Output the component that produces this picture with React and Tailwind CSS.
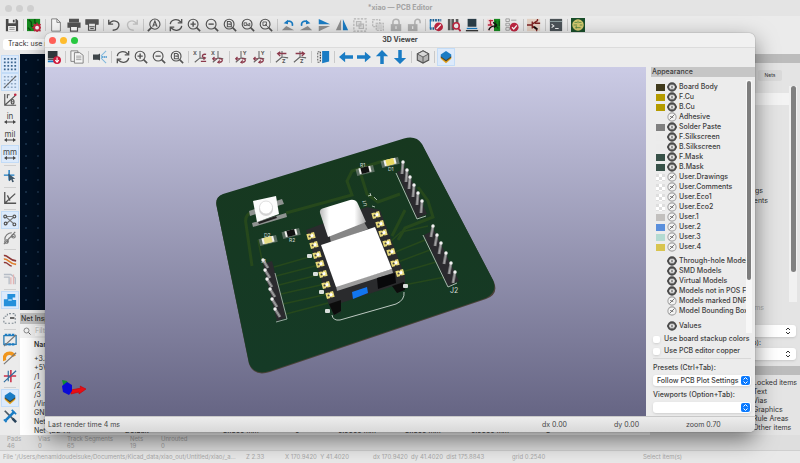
import { useState } from 'react'

const GRAY = '#545454'
const BLUE = '#1a7cc4'
const RED = '#bf2641'

const Svg = ({ children, className = 'w-[14px] h-[14px]' }) => (
  <svg viewBox="0 0 16 16" className={className} fill="none" stroke={GRAY} strokeWidth="1.3" aria-hidden="true">
    {children}
  </svg>
)

const Lens = ({ children }) => (
  <Svg>
    <circle cx="7" cy="7" r="5.6" />
    <path d="M11 11l4 4" strokeWidth="1.8" />
    {children}
  </Svg>
)

const Axis = ({ up, letter, flip }) => (
  <Svg>
    <path d="M8 1v8M8 9l6 1M8 9l-6 5" stroke="#666" strokeWidth="1.2" />
    <path d={flip ? 'M9 10c5-1 5 4 1 4M10 12l-2 2 2 1' : 'M15 5c-5-1-6 4-1 4M12 8l2 1-2 2'} stroke="#8c3a4c" strokeWidth="1.5" />
    <path d={flip ? 'M2 10h5M4 8l-2 2 2 2' : 'M9 13h6'} stroke="#8c3a4c" strokeWidth="1.4" />
    <text x={up ? 10 : 0} y="6" fontSize="6" fontWeight="700" fill={GRAY} stroke="none">{letter}</text>
  </Svg>
)

const AxisZ = ({ flip }) => (
  <Svg>
    <path d="M8 1v7M8 8l7 1M8 8l-7 6" stroke="#666" strokeWidth="1.2" />
    <path d={flip ? 'M3 4h9M10 2l3 2-3 3' : 'M13 4H4M6 2L3 4l3 3'} stroke="#8c3a4c" strokeWidth="1.5" />
    <text x="8" y="15" fontSize="6" fontWeight="700" fill={GRAY} stroke="none">Z</text>
  </Svg>
)

const Arrow = ({ d }) => (
  <Svg>
    <path d={d} fill={BLUE} stroke="none" />
  </Svg>
)

const icons = {
  save: (
    <Svg>
      <path d="M1 1h12l2 2v12H1z" fill="#484848" stroke="none" />
      <path d="M4 1h8v5H4zM3.5 9h9v6h-9z" fill="#eee" stroke="none" />
      <path d="M9 2h2v3H9z" fill="#484848" stroke="none" />
      <path d="M5 11h6M5 13h6" stroke="#888" strokeWidth="1" />
    </Svg>
  ),
  boardSetup: (
    <Svg>
      <path d="M0 1h15v14H0z" fill="#16891f" stroke="none" />
      <path d="M2 2l3 3v4l3 3M9 1v4l4 3M1 11l3 3" stroke="#0a4d10" strokeWidth="1.5" />
      <circle cx="11.5" cy="11" r="3.2" stroke={RED} strokeWidth="2" fill="#eee" />
      <path d="M11.5 5.5v2M11.5 14v2M6 11h2M15 11h1M7.5 7l1.5 1.5M14 8.5L15.5 7M9 14l-1 1M14 14l1.5 1" stroke={RED} strokeWidth="1.6" />
    </Svg>
  ),
  page: (
    <Svg>
      <path d="M3 1h6l4 4v10H3z" fill="#f6f6f6" strokeWidth="1" stroke="#777" />
      <path d="M9 1v4h4" strokeWidth="1" stroke="#777" />
    </Svg>
  ),
  print: (
    <Svg>
      <path d="M3 1.5h10v3H3z" fill={GRAY} />
      <path d="M0.5 5h15v6h-3V9h-9v2h-3z" fill={GRAY} stroke="none" />
      <path d="M4 9.5h8V15H4z" fill="#fff" />
    </Svg>
  ),
  plot: (
    <Svg>
      <path d="M1 2h14v5h-3V5H4v2H1z" fill={GRAY} stroke={GRAY} />
      <path d="M4 6h8v8H4z" fill="#e8e8e8" />
      <path d="M5 10h6M6 12h4" />
    </Svg>
  ),
  undo: (
    <Svg>
      <path d="M2 2v5h5M2.5 7c3-6 12-4 11 2-1 4-4 5-7 5" strokeWidth="1.6" />
    </Svg>
  ),
  redo: (
    <Svg>
      <path d="M14 2v5H9M13.5 7C10 1 2 3 3 9c1 4 4 5 7 5" stroke="#c2c2c2" strokeWidth="1.6" />
    </Svg>
  ),
  find: (
    <Svg>
      <circle cx="9" cy="7" r="5.8" />
      <path d="M5 11l-4 4" strokeWidth="2" />
      <path d="M6.5 10L9 3.5 11.5 10M7.3 8h3.4" />
    </Svg>
  ),
  refresh: (
    <Svg>
      <path d="M1.5 7C2 2 9 0 13.5 4.5M14.5 1v4.5H10M14.5 9C14 14 7 16 2.5 11.5M1.5 15v-4.5H6" strokeWidth="1.5" />
    </Svg>
  ),
  zoomIn: <Lens><path d="M4 7h6M7 4v6" strokeWidth="1.6" /></Lens>,
  zoomOut: <Lens><path d="M4 7h6" strokeWidth="1.6" /></Lens>,
  zoomFit: <Lens><path d="M5 4h3l1.5 1.5V10H5zM6 7h3" strokeWidth="1.2" /></Lens>,
  zoomObjects: <Lens><path d="M3.5 5.5h3v3h-3zM7 8l3-2v3z" strokeWidth="1" /></Lens>,
  zoomSel: <Lens><path d="M4.5 4.5h4v4h-4zM7 7l3 3" strokeWidth="1" /></Lens>,
  rotL: (
    <Svg>
      <path d="M1 14h14L6 9z" fill="#909090" stroke="none" />
      <path d="M13 9c1-5-4-7-7-4" stroke={BLUE} strokeWidth="1.8" />
      <path d="M3 6l5-4v5z" fill={BLUE} stroke="none" />
    </Svg>
  ),
  rotR: (
    <Svg>
      <path d="M15 14H1l9-5z" fill="#909090" stroke="none" />
      <path d="M3 9C2 4 7 2 10 5" stroke={BLUE} strokeWidth="1.8" />
      <path d="M13 6L8 2v5z" fill={BLUE} stroke="none" />
    </Svg>
  ),
  flipV: (
    <Svg>
      <path d="M2 1l13 6H2z" fill={BLUE} stroke="none" />
      <path d="M2 15l13-6H2z" fill="#909090" stroke="none" />
    </Svg>
  ),
  flipH: (
    <Svg>
      <path d="M7 1v13H1z" fill="#909090" stroke="none" />
      <path d="M9 1v13h6z" fill={BLUE} stroke="none" />
    </Svg>
  ),
  group: (
    <Svg>
      <path d="M1 1h14v14H1z" stroke="#b5b5b5" strokeDasharray="2.5 1.5" />
      <path d="M4 4h5v5H4zM7 7h5v5H7z" stroke="#bbb" fill="#ddd" />
    </Svg>
  ),
  ungroup: (
    <Svg>
      <path d="M2 2h8v8H2zM6 6h8v8H6z" stroke="#b5b5b5" strokeDasharray="2.5 1" />
      <path d="M7 7h6v6H7z" fill="#d5d5d5" stroke="none" />
    </Svg>
  ),
  lock: (
    <Svg>
      <path d="M4.5 8V4.5c0-4 7-4 7 0V8" stroke="#b5b5b5" strokeWidth="1.8" />
      <path d="M2 7h12v8H2z" fill="#b0b0b0" stroke="none" />
      <path d="M8 9.500v3" stroke="#eee" />
    </Svg>
  ),
  unlock: (
    <Svg>
      <path d="M9 8V4.5c0-4 6-4 6 0V6" stroke="#b5b5b5" strokeWidth="1.8" />
      <path d="M1 7h11v8H1z" fill="#b0b0b0" stroke="none" />
      <path d="M6.5 9.5v3" stroke="#eee" />
    </Svg>
  ),
  footprintEditor: (
    <Svg>
      <path d="M1 2h13v10H1z" fill="#f3f3f3" stroke="none" />
      <path d="M1 2.5h13M1 12h8" stroke="#1d5f92" strokeWidth="3" strokeDasharray="2 1" />
      <path d="M1.5 2v10" stroke={BLUE} />
      <circle cx="11" cy="10" r="5" fill={RED} stroke="none" />
      <path d="M8.5 12.5l5-5" stroke="#fff" strokeWidth="1.6" />
    </Svg>
  ),
  footprintLib: (
    <Svg>
      <path d="M1 1h3v13H1zM5 1h3v13H5zM10 1h3v8h-3z" fill="#5b5b5b" stroke="none" />
      <circle cx="10.5" cy="9" r="3.5" stroke={RED} strokeWidth="1.8" fill="#eee" />
      <path d="M13 12l2.5 3" stroke={RED} strokeWidth="2" />
    </Svg>
  ),
  viewer: (
    <Svg>
      <path d="M3 1h10v9H3z" fill="#2c3e48" stroke="none" />
      <path d="M2 12h12" stroke={BLUE} strokeWidth="1.5" />
      <path d="M1 14.5h14" stroke="#333" strokeWidth="1.5" />
    </Svg>
  ),
  updatePcb: (
    <Svg>
      <path d="M0 1h15v14H0z" fill="#f0dede" stroke="none" />
      <path d="M8 1h7v14H8z" fill="#158a20" stroke="none" />
      <path d="M10 3v6l3 3M14 3v6" stroke="#0a4d10" strokeWidth="1.3" />
      <path d="M2 3h5M4 2v6M1 8h5" stroke={RED} strokeWidth="1.5" />
      <path d="M2 14c1-4 4-5 8-5M7 5l4 3-3 3" stroke="#111" strokeWidth="1.6" />
    </Svg>
  ),
  drc: (
    <Svg>
      <path d="M1 1h4v3H1zM1 6h4v3H1zM1 11h4v3H1z" stroke="#999" strokeWidth="1" />
      <path d="M7 2.5h6" stroke="#aaa" />
      <circle cx="10.5" cy="10.5" r="5" fill={RED} stroke="none" />
      <path d="M8 10.5l2 2 3.5-4" stroke="#fff" strokeWidth="1.5" />
    </Svg>
  ),
  schematic: (
    <Svg>
      <path d="M0 1h15v14H0z" fill="#e5d3c6" stroke="none" />
      <path d="M0 8h6M6 4v8M6 7l6-4v-2M6 9l5 4v2M9 6h6" stroke="#7d2323" strokeWidth="1.5" />
      <path d="M8 10l4 3" stroke="#111" strokeWidth="2" />
    </Svg>
  ),
  console: (
    <Svg>
      <path d="M1 1h14v14H1z" fill="#4c5358" stroke="none" />
      <path d="M1 4h14" stroke="#9aa" strokeWidth="1" />
      <path d="M3 7l2.5 2L3 11M7 12h4" stroke="#eee" />
    </Svg>
  ),
  plugin: (
    <Svg>
      <path d="M0 0h16v16H0z" fill="#1a4f2b" stroke="none" />
      <circle cx="8" cy="8" r="6.6" fill="#d6ca70" stroke="none" />
      <path d="M4 5h3M9 5h3M3 8h4M10 8h3M5 11h6M8 3v3M6 9v3" stroke="#5d8a45" strokeWidth="1" />
    </Svg>
  ),
  reload: (
    <Svg>
      <path d="M1 1h11v8H1z" fill="#30383c" stroke="none" />
      <path d="M1 10.5h8" stroke="#222" strokeWidth="1.5" />
      <path d="M1 13h8" stroke={BLUE} strokeWidth="2" />
      <circle cx="11.5" cy="11.5" r="4.5" fill="#d0193a" stroke="none" />
      <path d="M11.5 8.5v5M9.5 11.5l2 2.5 2-2.5" stroke="#fff" strokeWidth="1.2" />
    </Svg>
  ),
  copy: (
    <Svg>
      <path d="M1 1h8v12H1z" fill="#f5f5f5" stroke="#777" strokeWidth="1" />
      <path d="M5 3h6l4 3v9H5z" fill="#f5f5f5" stroke="#777" strokeWidth="1" />
      <path d="M7 7h6M7 9h6M7 11h6" stroke="#999" strokeWidth="1" />
    </Svg>
  ),
  raytrace: (
    <Svg>
      <path d="M0 5h6l2-1v8L6 11H0z" fill="#3f464a" stroke="none" />
      <path d="M9 7l6-6M9 8h7M9 9l6 6" stroke="#82b9dd" strokeWidth="1.2" />
      <path d="M10 8h6" stroke={BLUE} strokeDasharray="1.5 1" />
    </Svg>
  ),
  rxc: <Axis letter="X" />,
  rxcc: <Axis letter="X" flip />,
  ryc: <Axis letter="Y" up flip />,
  rycc: <Axis letter="Y" up flip />,
  rzc: <AxisZ />,
  rzcc: <AxisZ flip />,
  flipBoard: (
    <Svg>
      <path d="M7 1h8v12l-8 2z" fill={BLUE} stroke="none" />
      <path d="M2 2h3M2 14h3M2 3v11" stroke="#666" strokeDasharray="2 1.5" />
      <path d="M5 2v12" stroke="#4d4d4d" strokeWidth="1.5" strokeDasharray="2 1" />
    </Svg>
  ),
  left: <Arrow d="M0 8l7-6v4h9v4H7v4z" />,
  right: <Arrow d="M16 8L9 2v4H0v4h9v4z" />,
  up: <Arrow d="M8 0L1 7h5v9h4V7h5z" />,
  down: <Arrow d="M8 16l7-7h-5V0H6v9H1z" />,
  cube: (
    <Svg>
      <path d="M8 1l6.5 3.5v7L8 15l-6.5-3.5v-7z" fill="#b5b5b5" />
      <path d="M8 1l6.5 3.5L8 8 1.5 4.5z" fill="#d8d8d8" strokeWidth="1" />
      <path d="M8 8v7" strokeWidth="1" />
    </Svg>
  ),
  layers: (
    <Svg>
      <path d="M2 8l6-4 6 4v2l-6 5-6-5z" fill="#e6a31c" stroke="none" />
      <path d="M2 7l6-4 6 4v1.5l-6 4.500-6-4.500z" fill="#4a4632" stroke="none" />
      <path d="M8 1l6 4v2l-6 4.500-6-4.500V5z" fill={BLUE} stroke="none" />
    </Svg>
  ),
  grid: (
    <Svg>
      {[2, 6, 10, 14].map((y) => (
        <path key={y} d={`M1 ${y}h14`} stroke="#3d668f" strokeWidth="2" strokeDasharray="2 2" />
      ))}
    </Svg>
  ),
  gridOverride: (
    <Svg>
      {[2, 6, 10, 14].map((y) => (
        <path key={y} d={`M1 ${y}h14`} stroke="#8ca5c0" strokeWidth="1.5" strokeDasharray="2 2" />
      ))}
      <path d="M1 15L15 1" stroke="#666" />
    </Svg>
  ),
  polar: (
    <Svg>
      <path d="M2 1v13h13M2 14L14 3" />
      <path d="M5 6V2h2.5" />
      <ellipse cx="11" cy="10" rx="1.6" ry="2.6" />
      <path d="M9.500 10h3" strokeWidth="1" />
      <circle cx="14" cy="2" r="1.5" fill={RED} stroke="none" />
    </Svg>
  ),
  cursor: (
    <Svg>
      <path d="M7 1v12M1 7h12" stroke={BLUE} strokeWidth="1.6" />
      <path d="M6 5l8 6-3 .5 1.5 3-2 .5-1-3-2.5 2z" fill="#3d5568" stroke="none" />
    </Svg>
  ),
  angle: (
    <Svg>
      <path d="M2 1v13h13M2 14L14 3M5 5l3 6" strokeWidth="1.5" />
    </Svg>
  ),
  ratsnest: (
    <Svg>
      <path d="M4 4h7M4 5l8 7M12 5l-8 7" stroke="#777" />
      <circle cx="2.5" cy="4" r="1.6" />
      <circle cx="13" cy="4" r="1.6" />
      <circle cx="3" cy="12" r="1.6" />
      <circle cx="13" cy="13" r="1.6" />
    </Svg>
  ),
  curved: (
    <Svg>
      <path d="M2 10C2 5 6 2 10 2M5 14c0-5 3-8 8-8M1 15L14 1" stroke="#777" />
      <circle cx="12" cy="6" r="2" stroke="#777" />
      <circle cx="4" cy="12" r="2" stroke="#777" />
    </Svg>
  ),
  contrast: (
    <Svg>
      <path d="M1 3c5-1 5 5 14 6" stroke="#8c3737" strokeWidth="1.8" />
      <path d="M1 7c5-1 5 5 14 6" stroke="#e0802e" strokeWidth="1.8" />
      <path d="M1 11c4-1 5 3 9 4" stroke="#8c3737" strokeWidth="1.5" />
    </Svg>
  ),
  netHighlight: (
    <Svg>
      <path d="M1 4h8l5 4v7M1 7h6v8" stroke="#b5bcc5" strokeWidth="1.5" />
      <path d="M9 7v8M12 4v11" stroke="#e3b4b4" strokeWidth="1.5" />
    </Svg>
  ),
  zoneFill: (
    <Svg>
      <path d="M5 1h9v4h-3v3h4v7H1V7h4z" fill="#2490db" stroke="none" />
      <path d="M6 8h4" stroke="#9bd0f3" strokeWidth="2" />
    </Svg>
  ),
  zoneOutline: (
    <Svg>
      <path d="M1 13V6h4V3h9v11H1" stroke="#7c8790" strokeDasharray="2 2" />
      <path d="M8 8h5" stroke="#555" strokeWidth="2" />
    </Svg>
  ),
  padOutline: (
    <Svg>
      <path d="M1 3h14v10H1z" stroke="#2c7cb3" strokeWidth="1.5" />
      <path d="M2 2h12M2 13h12" stroke={BLUE} strokeWidth="2.5" strokeDasharray="3 1" />
      <path d="M1 15L15 2" stroke="#777" />
    </Svg>
  ),
  viaOutline: (
    <Svg>
      <path d="M2 11a6 6 0 0 1 11-5" stroke="#f0961e" strokeWidth="4" />
      <path d="M1 15L15 2" stroke="#777" />
    </Svg>
  ),
  trackOutline: (
    <Svg>
      <path d="M1 8h14M9 1v14" stroke="#cc3148" strokeWidth="1.8" />
      <path d="M6 2v12M1 15L15 2" stroke="#2a6b9d" />
    </Svg>
  ),
  tools: (
    <Svg>
      <path d="M2 2l11 11" stroke="#4b5a66" strokeWidth="2" />
      <path d="M13 3L3 13" stroke={BLUE} strokeWidth="3" />
      <path d="M10 1l5 5M1 12l3 3" stroke={BLUE} strokeWidth="2" />
      <path d="M11 11l4 4" stroke="#29445b" strokeWidth="3" />
    </Svg>
  ),
}

const mainTools = 'save|boardSetup|page print plot|undo redo|find|refresh zoomIn zoomOut zoomFit zoomObjects zoomSel|rotL rotR flipV flipH group ungroup lock unlock|footprintEditor footprintLib viewer|updatePcb drc|schematic|console|plugin'
const viewerTools = 'reload|copy|raytrace|refresh zoomIn zoomOut zoomFit|rxc rxcc|ryc rycc|rzc rzcc|flipBoard|left right up down|cube|layers'
const sideTools = 'grid gridOverride polar in mil mm|cursor|angle|ratsnest curved|contrast netHighlight|zoneFill zoneOutline|padOutline viaOutline trackOutline|layers tools'
const pressed = ['grid', 'gridOverride', 'mm', 'ratsnest', 'zoneFill', 'layers']

const parse = (tools) => tools.split('|').map((g) => g.split(' '))

function Unit({ name }) {
  return (
    <span className="flex flex-col items-center text-[8px] leading-[8px] text-[#444]">
      {name}
      <svg viewBox="0 0 12 4" className="w-3 h-1" fill="#444" aria-hidden="true">
        <path d="M0 2l3-2v1.5h6V0l3 2-3 2V2.5H3V4z" />
      </svg>
    </span>
  )
}

function Toolbar({ tools, vertical, wide }) {
  return (
    <div className={vertical ? 'flex flex-col items-center' : 'flex items-center h-[18px]'}>
      {parse(tools).map((group, i) => (
        <div key={i} className={vertical ? 'flex flex-col items-center' : 'flex items-center'}>
          {i > 0 && (
            <span
              className={
                vertical
                  ? 'w-3 h-1 flex items-center before:block before:w-full before:h-px before:bg-[#d0d0d0]'
                  : `${wide ? 'w-[5px]' : 'w-1'} h-3 flex justify-center before:block before:w-px before:h-full before:bg-[#c9c9c9]`
              }
            />
          )}
          {group.map((name) => (
            <button
              key={name}
              type="button"
              aria-label={name}
              className={`w-[18px] h-[18px] shrink-0 flex items-center justify-center ${
                pressed.includes(name) ? 'bg-[#dceafb] border border-[#c3dcf7]' : ''
              }`}
            >
              {icons[name] || <Unit name={name} />}
            </button>
          ))}
        </div>
      ))}
    </div>
  )
}

const layers = [
  ['Board Body', 'bg-[#403a1c]', true],
  ['F.Cu', 'bg-[#b49b00]', true],
  ['B.Cu', 'bg-[#b49b00]', true],
  ['Adhesive', '', false],
  ['Solder Paste', 'bg-[#808080]', true],
  ['F.Silkscreen', 'bg-[#ebebeb]', true],
  ['B.Silkscreen', 'bg-[#ebebeb]', true],
  ['F.Mask', 'bg-[#375148]', true],
  ['B.Mask', 'bg-[#375148]', true],
  ['User.Drawings', 'checker', false],
  ['User.Comments', 'checker', false],
  ['User.Eco1', 'checker', false],
  ['User.Eco2', 'checker', false],
  ['User.1', 'bg-[#c2c0be]', false],
  ['User.2', 'bg-[#5a8fdc]', false],
  ['User.3', 'bg-[#b4dbd2]', false],
  ['User.4', 'bg-[#d8c44f]', false],
]

const models = [
  ['Through-hole Models', '', true],
  ['SMD Models', '', true],
  ['Virtual Models', '', true],
  ['Models not in POS File', '', true],
  ['Models marked DNP', '', false],
  ['Model Bounding Boxes', '', false],
]

function LayerRow({ name, color, on }) {
  const [visible, setVisible] = useState(on)
  const checker = 'bg-[conic-gradient(#fff_25%,#dedede_0_50%,#fff_0_75%,#dedede_0)] bg-[length:6px_6px]'
  return (
    <li className="flex items-center h-[10px]">
      <span className={`w-[9px] h-[7px] shrink-0 ${color === 'checker' ? checker : color}`} />
      <button
        type="button"
        aria-label={`Toggle ${name}`}
        onClick={() => setVisible(!visible)}
        className="ml-[2px] mr-[2px] shrink-0"
      >
        <Svg className="w-[10px] h-[10px]">
          {visible ? (
            <>
              <path d="M0 8c3-5 13-5 16 0-3 5-13 5-16 0z" fill="#e8e8e8" stroke="#4a4a4a" strokeWidth="1.2" />
              <circle cx="8" cy="8" r="6" stroke="#4a4a4a" strokeWidth="3" />
              <circle cx="8" cy="8" r="1.8" fill="#888" stroke="none" />
            </>
          ) : (
            <>
              <circle cx="8" cy="8" r="6.6" fill="#f4f4f4" stroke="#a2a2a2" strokeWidth="1.7" />
              <path d="M4 12l8-8M5 7l5 2" stroke="#666" strokeWidth="1.4" />
            </>
          )}
        </Svg>
      </button>
      <span className="whitespace-nowrap">{name}</span>
    </li>
  )
}

function Select({ label, options }) {
  return (
    <div className="mt-1">
      <label className="flex flex-col gap-[2px]">
        {label}
        <span className="relative">
          <select className="appearance-none w-full h-[11px] pl-1 rounded-[3px] bg-white shadow-sm">
            {options.map((o) => (
              <option key={o}>{o}</option>
            ))}
          </select>
          <svg viewBox="0 0 9 9" className="absolute right-px top-px w-[9px] h-[9px] pointer-events-none" aria-hidden="true">
            <rect width="9" height="9" rx="2" fill="#0a7aff" />
            <path d="M2.5 3.500l2-2 2 2M2.5 5.500l2 2 2-2" fill="none" stroke="#fff" />
          </svg>
        </span>
      </label>
    </div>
  )
}

function Appearance() {
  return (
    <aside className="w-[104px] shrink-0 flex flex-col bg-[#ececec] font-medium text-[#3c3c3c]">
      <h2 className="h-[10px] shrink-0 pl-px bg-[#c6c6c6]">Appearance</h2>
      <div className="flex-1 min-h-0 mt-[3px] mr-[3px] pl-[5px] flex overflow-hidden">
        <div className="flex-1 overflow-hidden pt-[2px]">
          <ul>
            {layers.map(([name, color, on]) => (
              <LayerRow key={name} name={name} color={color} on={on} />
            ))}
          </ul>
          <ul className="mt-1">
            {models.map(([name, color, on]) => (
              <LayerRow key={name} name={name} color={color} on={on} />
            ))}
          </ul>
          <ul className="mt-[5px]">
            <LayerRow name="Values" color="" on />
          </ul>
        </div>
        <div className="w-[6px] bg-[#f7f7f7] pl-px pt-px">
          <div className="w-1 h-[79%] rounded-full bg-[#7d7d7d]" />
        </div>
      </div>
      <div className="pl-[2px] pr-1 pb-[3px]">
        {['Use board stackup colors', 'Use PCB editor copper'].map((text) => (
          <label key={text} className="flex items-center h-3 gap-1 whitespace-nowrap">
            <input type="checkbox" className="appearance-none w-[7px] h-[7px] rounded-[2px] bg-white shadow-sm shrink-0" />
            {text}
          </label>
        ))}
        <div className="border-t border-[#d8d8d8] mt-px" />
        <Select label="Presets (Ctrl+Tab):" options={['Follow PCB Plot Settings']} />
        <Select label="Viewports (Option+Tab):" options={['']} />
      </div>
    </aside>
  )
}

const leftPads = [[311, 236], [314, 245], [317, 255], [320, 264], [323, 274], [326, 285], [330, 295]]
const rightPads = [[376, 215], [380, 224], [383, 233], [387, 243], [391, 252], [395, 263], [400, 273]]
const pinsJ1 = [[263, 260], [265, 270], [267, 279], [270, 289], [272, 299], [275, 309]]
const pinsJ3 = [[403, 162], [407, 170], [410, 177], [414, 185], [418, 193], [422, 201]]
const pinsJ2 = [[433, 226], [437, 235], [441, 243], [446, 253], [451, 263], [455, 272]]

const Pins = ({ pins, dx, dy }) =>
  pins.map(([x, y]) => (
    <g key={x}>
      <path d={`M${x} ${y}l${dx} ${dy}`} stroke="#7c7c7e" strokeWidth="3" />
      <path d={`M${x} ${y}l${dx} ${dy}`} stroke="#a9a9a9" strokeWidth="1" />
      <circle cx={x} cy={y} r="1.7" fill="#f2f2f2" />
    </g>
  ))

function Smd({ x, y, body }) {
  return (
    <g transform={`translate(${x} ${y}) rotate(-14)`}>
      <rect x="-9" y="-3" width="18" height="7" fill="#8a938d" opacity=".6" />
      <rect x="-6" y="-3" width="12" height="6" fill="#f1f1ee" />
      <rect x="-4" y="-3" width="8" height="6" fill={body} />
    </g>
  )
}

function Scene() {
  return (
    <svg
      viewBox="45 67 601 349"
      preserveAspectRatio="xMidYMid slice"
      className="w-full h-full"
      role="img"
      aria-label="3D board view"
    >
      <defs>
        <linearGradient id="sky" x1="0" y1="0" x2="0" y2="1">
          <stop offset="0" stopColor="#cbcbe5" />
          <stop offset="1" stopColor="#666584" />
        </linearGradient>
        <linearGradient id="board" x1="0" y1="0" x2="0" y2="1">
          <stop offset="0" stopColor="#17381f" />
          <stop offset="1" stopColor="#153a26" />
        </linearGradient>
        <linearGradient id="metal" x1="0" y1="0" x2="1" y2="0">
          <stop offset="0" stopColor="#b9b9b9" />
          <stop offset=".2" stopColor="#fff" />
          <stop offset=".75" stopColor="#fff" />
          <stop offset="1" stopColor="#aaa" />
        </linearGradient>
      </defs>
      <rect x="45" y="67" width="601" height="349" fill="url(#sky)" />

      <path d="M223 195L404 140Q416 136 422 145L494 282Q499 294 486 299L270 372Q254 377 249 364L217 208Q214 197 223 195z" fill="#4b4238" />
      <path d="M223 194L404 138.5Q416 135 422 144L493 280Q498 292 486 298L270 371Q254 376 249 363L217 208Q214 197 223 194z" fill="url(#board)" />

      <g fill="none" stroke="#26481c" strokeWidth="3">
        <path d="M252 266L246 224Q244 215 252 212M286 213L352 195L347 181L352 171L386 160" />
        <path d="M361 175L367 194L378 202L400 194M418 187L428 201L433 217L405 228L398 240M405 210L392 236" />
        <path d="M388 244L401 232L428 226M393 253L425 240M398 262L430 250M402 272L436 262M404 285L445 277" strokeWidth="1.5" />
        <path d="M274 267L316 255M276 276L319 265M279 285L322 274M281 294L325 284M283 304L328 294M286 314L328 303M258 240L262 260" strokeWidth="1.5" />
      </g>

      {/* push button */}
      <path d="M249 211l6-2 1 5-6 2zM276 201l6-2 2 5-7 2zM252 223l34-10 1 4-34 10z" fill="#8f9391" />
      <path d="M258 222l18-6 1 2-18 6z" fill="#222" />
      <path d="M253 201L276 196L279 214L257 222z" fill="#fbfbfb" />
      <circle cx="266" cy="209" r="7" fill="#d5d5d5" />
      <circle cx="266" cy="207.500" r="6.500" fill="#fff" stroke="#c9c9c9" strokeWidth=".6" />

      <Smd x={268} y={240} body="#e5dc85" />
      <Smd x={291} y={233} body="#111" />
      <Smd x={365} y={170} body="#111" />
      <Smd x={390} y={162} body="#e9da62" />

      {/* controller module */}
      <path d="M306 230L367 207L380 210L405 276L405 289L397 293L393 286L341 303L341 312L334 315L328 302z" fill="#2a2b2d" />
      <path d="M329 304l12-4v11l-7 4zM392 286l12-4 1 8-8 3z" fill="#0c0c0c" />
      <path d="M329 233L364 222L368 229L331 243z" fill="#868686" />
      <path d="M320 213Q319 209 324 208L350 200Q356 199 358 204L366 222L328 237z" fill="url(#metal)" />
      <path d="M336 286L392 269L393 273L337 291z" fill="#9c9c9c" />
      <path d="M321 245L375 227L392 269L336 287z" fill="#fff" />
      <path d="M377 278L395 273L396 283L378 289z" fill="#08080a" />
      <path d="M352 292L367 287L368 293L353 299z" fill="#1276ef" />
      {[...leftPads, ...rightPads].map(([x, y]) => (
        <g key={`${x}-${y}`} transform={`translate(${x} ${y}) rotate(-16)`}>
          <path d="M-4-3h3l1 1 1-1h3v6H1L0 2l-1 1h-3z" fill="#e6d878" />
          <circle r="1.6" cx="1" fill="#fff" />
          <circle r="1" cx="-1.500" fill="#444" />
        </g>
      ))}
      {[[309, 256], [315, 274], [321, 292], [327, 311], [405, 286]].map(([x, y]) => (
        <rect key={x} x={x - 2} y={y - 2} width="5" height="4" rx="1" fill="#d9dedb" />
      ))}
      <path d="M332 315Q333 321 340 320L396 304Q405 300 404 292" fill="none" stroke="#cfd8d2" strokeWidth=".9" />

      {/* pin headers */}
      <path d="M263 264L272 261L286 318L277 321z" fill="#2b2a2e" />
      <path d="M275 273L287 319L276 322" fill="none" stroke="#cfd8d2" strokeWidth=".7" />
      <Pins pins={pinsJ1} dx={5} dy={8} />
      <path d="M397 172L406 168L427 214L417 218z" fill="#2b2a2e" />
      <path d="M396 173L417 219L426 216" fill="none" stroke="#cfd8d2" strokeWidth=".8" />
      <Pins pins={pinsJ3} dx={-1} dy={12} />
      <path d="M424 235L434 230L459 281L448 286z" fill="#2b2a2e" />
      <path d="M423 235L448 287L457 283" fill="none" stroke="#cfd8d2" strokeWidth=".8" />
      <Pins pins={pinsJ2} dx={-2} dy={11} />

      <g fill="#d5ddd7" fontFamily="Inter, sans-serif" fontSize="5">
        <text x="264" y="237">D2</text>
        <text x="289" y="242">R2</text>
        <text x="360" y="167">R1</text>
        <text x="388" y="171">D1</text>
        <text x="450" y="293" fontSize="7">J2</text>
        <text x="261" y="263">J1</text>
        <text transform="translate(367 206) rotate(-100)">U1</text>
      </g>
      <path d="M368 196l3-1M374 197l3 3M372 206l3 1M370 193l1 3" stroke="#cfd8d2" strokeWidth=".8" />

      {/* axis gizmo */}
      <path d="M62 380l5 1 2 5-5 2z" fill="#13912f" />
      <path d="M71 390l10-2-1-2 6 3-7 5v-2l-8 2z" fill="#e80d14" stroke="#c00" strokeWidth=".6" />
      <path d="M67 382l5 3v6l-3 4-6-3-1-6z" fill="#0a0ad6" />
    </svg>
  )
}

function Viewer() {
  return (
    <section className="absolute left-[45px] right-[45px] top-[33px] bottom-[31px] flex flex-col rounded-t-[6px] rounded-b-[5px] overflow-hidden bg-[#ececec] shadow-[0_8px_22px_rgba(0,0,0,0.5),0_0_1px_rgba(0,0,0,0.6)]">
      <header className="relative h-[15px] shrink-0 flex items-center justify-center border-b border-[#dcdcdc] bg-[#f1f1f1]">
        <div className="absolute left-1 flex gap-1">
          <button type="button" aria-label="Close" className="w-[7px] h-[7px] rounded-full bg-[#ff5f57]" />
          <button type="button" aria-label="Minimize" className="w-[7px] h-[7px] rounded-full bg-[#febc2e]" />
          <button type="button" aria-label="Zoom" className="w-[7px] h-[7px] rounded-full bg-[#28c840]" />
        </div>
        <h1 className="text-[7px] font-bold text-[#444]">3D Viewer</h1>
      </header>
      <div className="h-[19px] shrink-0">
        <Toolbar tools={viewerTools} wide />
      </div>
      <div className="flex-1 min-h-0 flex gap-[5px]">
        <div className="flex-1 min-w-0 overflow-hidden">
          <Scene />
        </div>
        <Appearance />
      </div>
      <footer className="h-4 shrink-0 flex items-center px-[3px] border-t border-[#c9c9c9] bg-linear-to-b from-[#ededed] to-[#d8d8d8] text-[#444]">
        <span className="flex-1">Last render time 4 ms</span>
        <span className="w-[72px]">dx 0.00</span>
        <span className="w-[72px]">dy 0.00</span>
        <span className="w-[66px]">zoom 0.70</span>
      </footer>
    </section>
  )
}

const nets = ['+3.3V', '+5V', '/1', '/2', '/3', '/Vin', 'GND', 'Net-(D1-A)', 'Net-(D2-A)']

function NetInspector() {
  return (
    <div className="h-[122px] shrink-0 flex flex-col overflow-hidden bg-white">
      <h2 className="h-[11px] shrink-0 pl-px bg-[#c2c2c2] text-[#333] font-medium leading-[11px]">Net Inspector</h2>
      <label className="h-[14px] shrink-0 flex items-center gap-1 pl-[3px] bg-[#f2f2f2]">
        <Svg className="w-2 h-2">
          <circle cx="7" cy="7" r="5" />
          <path d="M11 11l4 4" strokeWidth="2" />
        </Svg>
        <input aria-label="Filter" placeholder="Filter" className="flex-1 min-w-0 bg-white placeholder:text-[#bbb]" />
      </label>
      <table className="w-full table-fixed text-left whitespace-nowrap text-[#333]">
        <thead>
          <tr className="h-[14px]">
            <th className="w-[105px] pl-[14px] font-semibold">Name</th>
            <th className="w-[98px] font-semibold">Net Class</th>
            <th className="w-[72px] font-semibold">Total Length</th>
            <th className="w-[43px] font-semibold">Vias</th>
            <th className="w-[67px] font-semibold">Via Length</th>
            <th className="w-[66px] font-semibold">Track Length</th>
            <th className="w-[75px] font-semibold">Die Length</th>
            <th className="font-semibold">Pads</th>
          </tr>
        </thead>
        <tbody>
          <tr className="h-[2px]" />
          {nets.map((net) => (
            <tr key={net} className="h-[9px] leading-[9px]">
              <td className="pl-[14px]">{net}</td>
              <td>Default</td>
              <td>3.1500 mm</td>
              <td>0</td>
              <td>0.0000 mm</td>
              <td>3.1500 mm</td>
              <td>0.0000 mm</td>
              <td>3</td>
            </tr>
          ))}
        </tbody>
      </table>
    </div>
  )
}

const DropDown = ({ label }) => (
  <span className="relative block">
    <select aria-label={label} className="appearance-none block w-full h-3 rounded-[3px] bg-white shadow-sm" />
    <svg viewBox="0 0 8 8" className="absolute right-1 top-[2px] w-2 h-2" fill="none" stroke="#333" aria-hidden="true">
      <path d="M2 3l2-2 2 2M2 5l2 2 2-2" />
    </svg>
  </span>
)

function EditorPanel() {
  return (
    <aside className="w-[150px] shrink-0 flex flex-col bg-[#e4e4e4] text-[#333]">
      <div className="h-[9px] bg-[#bcbcbc]" />
      <div className="flex justify-end pt-[7px] pr-[18px]">
        <button type="button" className="w-6 h-[11px] rounded-[2px] bg-[#dadada] text-[5px] leading-[11px]">Nets</button>
      </div>
      <div className="flex h-[216px] mt-[5px] pr-[3px]">
        <div className="flex-1 pt-[7px]">
          <div className="h-3 bg-[#f3f3f3]" />
          <p className="mt-[81px] leading-[10px] text-right pr-[26px]">Drawings</p>
          <p className="leading-[10px] text-right pr-[21px]">Comments</p>
        </div>
        <div className="w-2 pl-[2px] bg-[#f1f1f1]">
          <div className="w-[5px] h-[86%] rounded-full bg-[#808080]" />
        </div>
      </div>
      <p className="mt-px h-[10px] pr-9 text-right text-[#aaa]">Items</p>
      <div className="mt-3 pr-1">
        <DropDown label="Presets" />
        <p className="mt-px h-[10px] pr-[35px] text-right">(Tab):</p>
        <DropDown label="Viewports" />
      </div>
      <div className="mt-[6px] h-[9px] shrink-0 bg-[#bcbcbc]" />
      <ul className="pt-[3px] pl-[103px] leading-[9px] whitespace-nowrap">
        {['Locked items', 'Text', 'Vias', 'Graphics', 'Rule Areas', 'Other items'].map((t) => (
          <li key={t}>{t}</li>
        ))}
      </ul>
    </aside>
  )
}

export default function App() {
  return (
    <div className="relative h-screen flex flex-col overflow-hidden bg-[#ebebeb] font-[Inter,sans-serif] text-[7px] leading-[10px] text-[#333]">
      <header className="relative h-4 shrink-0 flex items-center justify-center bg-[#e4e4e4]">
        <div className="absolute left-[5px] flex gap-1">
          <span className="w-[7px] h-[7px] rounded-full bg-[#cfcfcf]" />
          <span className="w-[7px] h-[7px] rounded-full bg-[#cfcfcf]" />
          <span className="w-[7px] h-[7px] rounded-full bg-[#cfcfcf]" />
        </div>
        <h1 className="font-bold text-[#a3a3a3]">*xiao — PCB Editor</h1>
      </header>
      <div className="pl-[3px] h-[18px] shrink-0">
        <Toolbar tools={mainTools} />
      </div>
      <div className="h-5 shrink-0 flex items-center pl-[3px]">
        <select aria-label="Track width" className="appearance-none w-[120px] h-[11px] pl-[5px] rounded-[3px] bg-white">
          <option>Track: use netclass width</option>
        </select>
      </div>

      <div className="flex-1 min-h-0 flex">
        <div className="w-5 shrink-0 pt-px">
          <Toolbar tools={sideTools} vertical />
        </div>
        <div className="flex-1 min-w-0 flex flex-col gap-[3px]">
          <div className="flex-1 bg-[#001023] bg-[radial-gradient(#26405c_0.5px,transparent_1px)] bg-[length:12px_12px]" />
          <NetInspector />
        </div>
        <EditorPanel />
      </div>

      <dl className="h-[15px] shrink-0 flex pl-[7px] bg-[#dedede] text-[6px] leading-[7px] text-[#a0a0a0]">
        {[
          ['Pads', '46', 'w-[31px]'],
          ['Vias', '0', 'w-[29px]'],
          ['Track Segments', '65', 'w-[63px]'],
          ['Nets', '19', 'w-[31px]'],
          ['Unrouted', '0', 'w-[40px]'],
        ].map(([k, v, w]) => (
          <div key={k} className={w}>
            <dt>{k}</dt>
            <dd>{v}</dd>
          </div>
        ))}
      </dl>
      <footer className="h-[13px] shrink-0 flex items-center pl-[3px] border-t border-[#cfcfcf] bg-[#e9e9e9] text-[6px] text-[#a8a8a8] whitespace-nowrap">
        <span className="w-[243px] pr-1 truncate">File '/Users/henamidoudeisuke/Documents/Kicad_data/xiao_out/Untitled/xiao/_a...</span>
        <span className="w-[39px]">Z 2.33</span>
        <span className="w-[88px]">X 170.9420&nbsp; Y 41.4020</span>
        <span className="w-[139px]">dx 170.9420&nbsp; dy 41.4020&nbsp; dist 175.8843</span>
        <span className="w-[131px]">grid 0.2540</span>
        <span>Select item(s)</span>
      </footer>

      <Viewer />
    </div>
  )
}
